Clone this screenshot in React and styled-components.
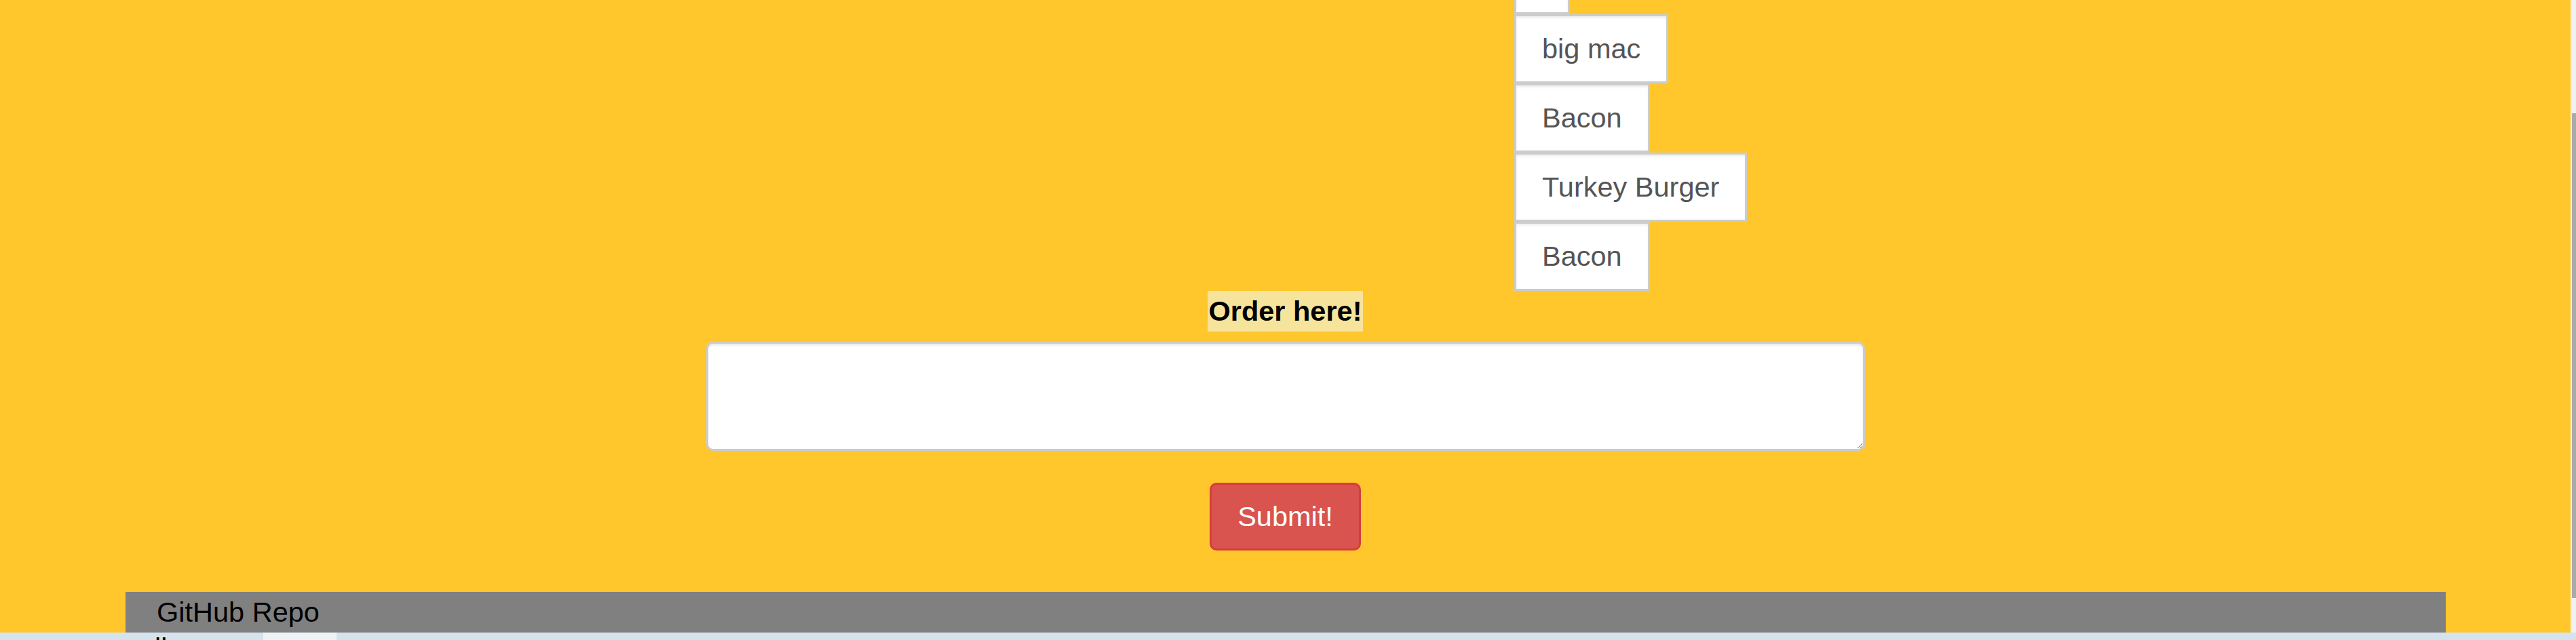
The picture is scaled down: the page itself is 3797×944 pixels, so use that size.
import React from "react";
import styled, { createGlobalStyle } from "styled-components";

const GlobalStyle = createGlobalStyle`
  html, body {
    margin: 0;
    padding: 0;
    overflow: hidden;
    font-family: "Liberation Sans", Arial, sans-serif;
  }
  * { box-sizing: border-box; }
`;

const Screen = styled.div`
  width: 3797px;
  height: 944px;
  display: flex;
  flex-direction: column;
  overflow: hidden;
`;

const Window = styled.div`
  height: 933px;
  display: flex;
  flex-direction: row;
`;

const Viewport = styled.main`
  flex: 1;
  background: #ffc72c;
  overflow: hidden;
  display: flex;
  flex-direction: column;
  align-items: center;
`;

const MenuList = styled.ul`
  list-style: none;
  margin: -81px 0 0 2232px;
  padding: 0;
  align-self: flex-start;
  display: flex;
  flex-direction: column;
  align-items: flex-start;
`;

const MenuItem = styled.li`
  background: #fff;
  border: 3px solid #cccccc;
  box-shadow: inset 0 3px 3px rgba(0, 0, 0, 0.06);
  color: #555555;
  font-size: 41.5px;
  line-height: 48px;
  height: 102px;
  padding: 24px 38px;
  white-space: nowrap;
  min-width: ${(p) => (p.$stub ? "77px" : "0")};
`;

const OrderLabel = styled.label`
  display: block;
  background: #f6e49c;
  color: #000;
  font-weight: bold;
  font-size: 41.5px;
  line-height: 60px;
  height: 60px;
  padding: 0 1px;
`;

const OrderBox = styled.textarea`
  display: block;
  margin-top: 15px;
  width: 1708px;
  height: 161px;
  border: 3px solid #cccccc;
  border-radius: 10px;
  background: #fff;
  box-shadow: inset 0 3px 3px rgba(0, 0, 0, 0.075);
  font-family: "Liberation Sans", Arial, sans-serif;
  font-size: 41.5px;
  color: #555;
  padding: 14px 29px;
  outline: none;
`;

const SubmitButton = styled.button`
  margin-top: 47px;
  height: 100px;
  padding: 23px 38px;
  background: #d9534f;
  border: 3px solid #d43f3a;
  border-radius: 10px;
  color: #fff;
  font-family: "Liberation Sans", Arial, sans-serif;
  font-size: 41.5px;
  line-height: 48px;
  cursor: pointer;
`;

const Footer = styled.footer`
  align-self: stretch;
  margin: 61px 184px 0 185px;
  height: 60px;
  background: #808080;
  display: flex;
  align-items: center;
  padding-left: 46px;
`;

const RepoLink = styled.a`
  color: #000;
  text-decoration: none;
  font-size: 41.5px;
  line-height: 60px;
`;

const ScrollTrack = styled.div`
  width: 8px;
  background: #f1f1f1;
  padding: 167px 0 0 2px;
`;

const ScrollThumb = styled.div`
  width: 6px;
  height: 715px;
  background: #aaaaaa;
`;

const Taskbar = styled.div`
  height: 11px;
  background: #d5e4ec;
  display: flex;
  flex-direction: row;
  overflow: hidden;
`;

const TaskText = styled.span`
  margin-left: 228px;
  width: 160px;
  font-size: 41.5px;
  line-height: 48px;
  margin-top: 1px;
  height: 10px;
  overflow: hidden;
  color: #000;
  display: block;
`;

const TaskTile = styled.div`
  width: 108px;
  background: #eef3f7;
`;

const items = ["big mac", "Bacon", "Turkey Burger", "Bacon"];

export default function App() {
  return (
    <>
      <GlobalStyle />
      <Screen>
        <Window>
          <Viewport>
            <MenuList>
              <MenuItem $stub />
              {items.map((name, i) => (
                <MenuItem key={i}>{name}</MenuItem>
              ))}
            </MenuList>
            <OrderLabel htmlFor="order">Order here!</OrderLabel>
            <OrderBox id="order" />
            <SubmitButton type="button">Submit!</SubmitButton>
            <Footer>
              <RepoLink href="#">GitHub Repo</RepoLink>
            </Footer>
          </Viewport>
          <ScrollTrack>
            <ScrollThumb />
          </ScrollTrack>
        </Window>
        <Taskbar>
          <TaskText>
            <span style={{ display: "block", marginTop: "-2px" }}>ll</span>
          </TaskText>
          <TaskTile />
        </Taskbar>
      </Screen>
    </>
  );
}
